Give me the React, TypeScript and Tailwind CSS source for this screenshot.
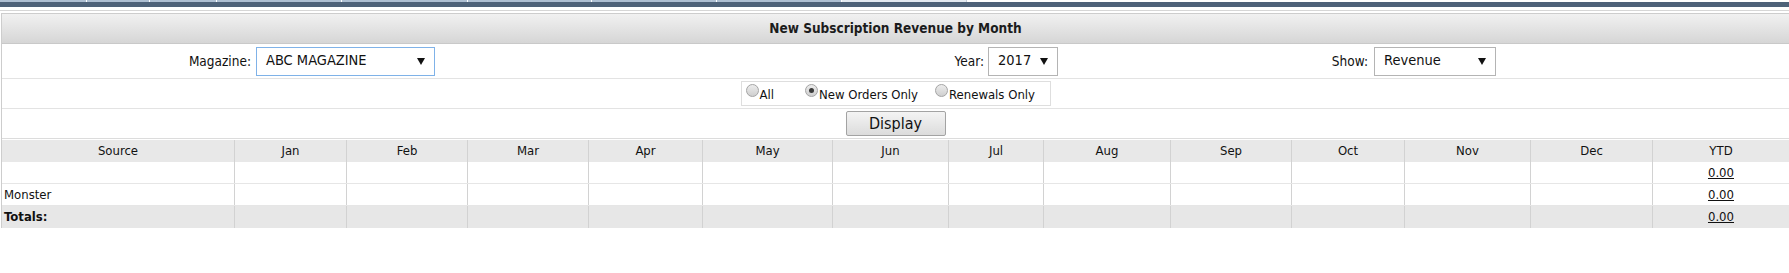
import React from "react"

const tabs = [87, 63, 67, 125, 126, 124, 125, 125]

const columns = ["Source", "Jan", "Feb", "Mar", "Apr", "May", "Jun", "Jul", "Aug", "Sep", "Oct", "Nov", "Dec", "YTD"]

const rows = [
  { source: "", ytd: "0.00" },
  { source: "Monster", ytd: "0.00" },
]

function Caret() {
  return (
    <svg width="8" height="7" viewBox="0 0 8 7" className="shrink-0">
      <path d="M0 0 L8 0 L4 7 Z" fill="#111" />
    </svg>
  )
}

function FakeSelect({ value, width, focused }: { value: string; width: string; focused?: boolean }) {
  return (
    <div
      className={`${width} h-[29px] flex items-center justify-between pl-[9px] pr-[9px] bg-white border text-[14.5px] text-[#111] ${
        focused ? "border-[#7fb2e8]" : "border-[#b4b4b4]"
      }`}
    >
      <span>{value}</span>
      <Caret />
    </div>
  )
}

function Radio({ label, checked, className }: { label: string; checked?: boolean; className?: string }) {
  return (
    <div className={`flex items-start ${className ?? ""}`}>
      <span className="mt-[2px] w-[13px] h-[13px] rounded-full border border-[#a4a4a4] bg-gradient-to-b from-[#ececec] to-[#cfcfcf] flex items-center justify-center">
        {checked && <span className="w-[5px] h-[5px] rounded-full bg-[#3a3a3a]" />}
      </span>
      <span className="ml-px mt-[6px] leading-none">{label}</span>
    </div>
  )
}

export default function App() {
  const grid =
    "grid grid-cols-[233px_112px_121px_121px_114px_130px_116px_95px_127px_121px_113px_126px_122px_1fr]"

  return (
    <div
      className="w-[1789px] h-[273px] bg-white overflow-hidden text-[13px] text-[#111]"
      style={{ fontFamily: '"DejaVu Sans Condensed", "Liberation Sans", sans-serif' }}
    >
      {/* tab strip */}
      <div className="flex h-[2px]">
        {tabs.map((w, i) => (
          <div key={i} className="bg-[#aebfd2] border-r border-white" style={{ width: w }} />
        ))}
        <div className="w-[125px] bg-[#e4eaf1] border-r border-[#c2ccd8]" />
      </div>
      <div className="h-[5px] bg-[#4e6279]" />
      <div className="h-[3px]" />
      <div className="h-px bg-[#d6d6d6]" />
      <div className="h-[2px]" />

      {/* panel */}
      <div className="ml-px border-l border-t border-[#cdcdcd]">
        <div className="h-[30px] flex items-center justify-center bg-gradient-to-b from-[#f1f1f1] to-[#d6d6d6] border-b border-[#c9c9c9]">
          <span className="font-bold text-[13.5px] text-[#1c1c1c]">New Subscription Revenue by Month</span>
        </div>

        {/* filters */}
        <div className="h-[35px] grid grid-cols-[252px_692px_40px_314px_71px_1fr] items-center border-b border-[#e3e3e3] text-[13.5px]">
          <div className="text-right pr-[3px]">Magazine:</div>
          <div className="pl-[2px]">
            <FakeSelect value="ABC MAGAZINE" width="w-[179px]" focused />
          </div>
          <div className="text-right pr-[2px]">Year:</div>
          <div className="pl-[2px]">
            <FakeSelect value="2017" width="w-[70px]" />
          </div>
          <div className="text-right pr-[3px]">Show:</div>
          <div className="pl-[3px]">
            <FakeSelect value="Revenue" width="w-[122px]" />
          </div>
        </div>

        {/* order type */}
        <div className="h-[30px] flex items-center justify-center border-b border-[#e3e3e3]">
          <div className="h-[25px] w-[310px] border border-[#dedede] flex items-start pl-[4px]">
            <Radio label="All" />
            <Radio label="New Orders Only" checked className="ml-[31px]" />
            <Radio label="Renewals Only" className="ml-[17px]" />
          </div>
        </div>

        {/* display */}
        <div className="h-[30px] flex items-center justify-center border-b border-[#dcdcdc]">
          <button className="w-[100px] h-[25px] border border-[#a3a3a3] rounded-[2px] bg-gradient-to-b from-[#f4f4f4] to-[#dcdcdc] text-[16px] text-[#111] leading-none">
            Display
          </button>
        </div>

        <div className="h-px" />

        {/* table */}
        <div className={`${grid} h-[22px] bg-[#e8e8e8]`}>
          {columns.map((c, i) => (
            <div
              key={c}
              className={`flex items-center justify-center ${i < columns.length - 1 ? "border-r border-[#d2d2d2]" : ""}`}
            >
              {c}
            </div>
          ))}
        </div>
        {rows.map((r, ri) => (
          <div key={ri} className={`${grid} h-[22px] border-b border-[#e6e6e6]`}>
            {columns.map((c, i) => (
              <div
                key={c}
                className={`flex items-center ${i === 0 ? "pl-[2px]" : "justify-center"} ${
                  i < columns.length - 1 ? "border-r border-[#d2d2d2]" : ""
                }`}
              >
                {i === 0 ? r.source : i === columns.length - 1 ? <span className="underline">{r.ytd}</span> : ""}
              </div>
            ))}
          </div>
        ))}
        <div className={`${grid} h-[22px] bg-[#e7e7e7]`}>
          {columns.map((c, i) => (
            <div
              key={c}
              className={`flex items-center ${i === 0 ? "pl-[2px] font-bold" : "justify-center"} ${
                i < columns.length - 1 ? "border-r border-[#d2d2d2]" : ""
              }`}
            >
              {i === 0 ? "Totals:" : i === columns.length - 1 ? <span className="underline">0.00</span> : ""}
            </div>
          ))}
        </div>
      </div>
    </div>
  )
}
